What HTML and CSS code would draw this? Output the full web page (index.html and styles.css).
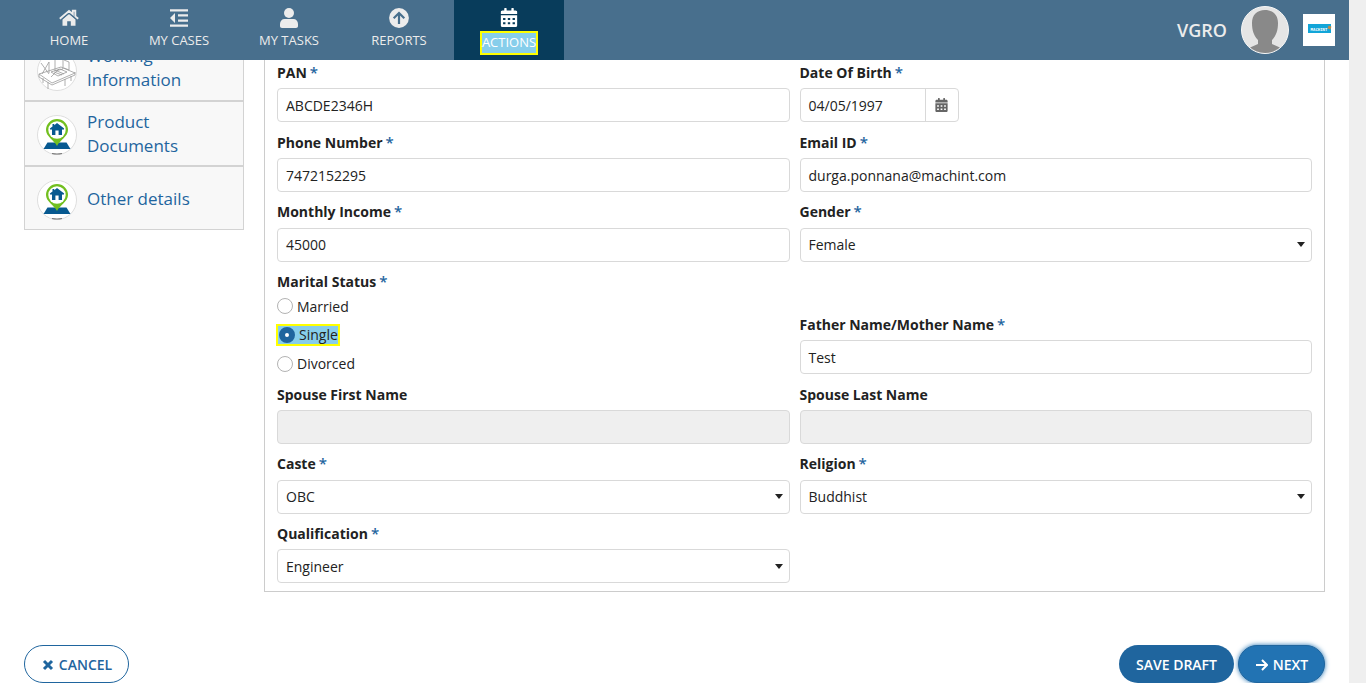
FILE: index.html
```html
<!DOCTYPE html>
<html lang="en">
<head>
<meta charset="utf-8">
<title>Applicant Details</title>
<link rel="stylesheet" href="styles.css">
</head>
<body>
<svg class="defs" width="0" height="0" aria-hidden="true">
  <symbol id="pin" viewBox="0 0 40 40">
    <circle cx="20" cy="20" r="19.5" fill="#fff" stroke="#dedede"/>
    <path d="M10.500 27.500h19l4 6.500h-27z" fill="#075990"/>
    <path d="M20 31c-3-6-11-9.500-11-16a11 11 0 0 1 22 0c0 6.500-8 10-11 16z" fill="#72bf1f"/>
    <circle cx="20" cy="15" r="8.700" fill="#fff"/>
    <path d="M20 8l7.200 5.500-1 1.500-1.200-.8V20h-3.400v-4.500h-3.200V20H15v-5.800l-1.200.8-1-1.500 2.700-2V9h1.800v1.200z" fill="#075990"/>
    <path d="M15 38.500q5 1 10 0" fill="none" stroke="#777" stroke-width="1.200"/>
  </symbol>
  <symbol id="calendar" viewBox="0 0 448 512">
    <path fill-rule="evenodd" d="M0 464c0 26 22 48 48 48h352c26 0 48-22 48-48V192H0zM320 268h64v54h-64zm0 116h64v54h-64zM192 268h64v54h-64zm0 116h64v54h-64zM64 268h64v54H64zm0 116h64v54H64zM400 64h-48V16c0-9-7-16-16-16h-32c-9 0-16 7-16 16v48H160V16c0-9-7-16-16-16h-32c-9 0-16 7-16 16v48H48C22 64 0 86 0 112v48h448v-48c0-26-22-48-48-48z"/>
  </symbol>
</svg>
<header class="topbar">
  <nav class="tabs">
    <a class="tab"><svg class="tab-icon" viewBox="0 0 20 20"><path d="M10 5.900l6.500 5.500V17.700h-4.700v-4.500H8.200v4.500H3.500v-6.300z"/><path d="M.8 10.800L10 3.100l3.800 3.200V2.700h2.500v5.700l2.900 2.400" fill="none" stroke="currentColor" stroke-width="1.900"/><path d="M2.300 11.700L10 5.300l7.700 6.400" fill="none" stroke="#486f8d" stroke-width=".8"/></svg><span class="tab-label">HOME</span></a>
    <a class="tab"><svg class="tab-icon" viewBox="0 0 20 20"><path d="M1 1.200h18v2.300H1zm8 5.100h10v2.300H9zm0 5.100h10v2.300H9zM1 16.500h18v2.300H1zM6 5v10L1 10z"/></svg><span class="tab-label">MY CASES</span></a>
    <a class="tab"><svg class="tab-icon" viewBox="0 0 20 20"><circle cx="10" cy="5" r="5"/><path d="M5.500 11h9c2.500 0 4.500 2 4.500 5v2c0 1.200-.8 2-2 2H3c-1.200 0-2-.8-2-2v-2c0-3 2-5 4.500-5z"/></svg><span class="tab-label">MY TASKS</span></a>
    <a class="tab"><svg class="tab-icon" viewBox="0 0 20 20"><circle cx="10" cy="10" r="9.900"/><path d="M10 16V5M4.700 10.300L10 5l5.300 5.300" fill="none" stroke="#486f8d" stroke-width="2.200"/></svg><span class="tab-label">REPORTS</span></a>
    <a class="tab tab-active"><svg class="tab-icon" viewBox="0 0 20 20"><use href="#calendar" x="1.500" y="0" width="17" height="19"/></svg><span class="tab-label tab-marked">ACTIONS</span></a>
  </nav>
  <div class="account">
    <span class="user">VGRO</span>
    <svg class="avatar" viewBox="0 0 48 48"><defs><clipPath id="face"><circle cx="24" cy="24" r="23"/></clipPath></defs><circle cx="24" cy="24" r="23.500" fill="#e5e5e5" stroke="#f7f7f7"/><path clip-path="url(#face)" d="M24 4c8 0 13 5 13 13 0 8-2 12-5 16l-1 1v4l9 4v6H8v-6l9-4v-4l-1-1c-3-4-5-8-5-16C11 9 16 4 24 4z" fill="#898989"/></svg>
    <div class="logo"><span class="logo-text">MACHINT</span><i class="logo-flag"></i></div>
  </div>
</header>
<div class="page">
  <aside class="steps">
    <div class="step"><svg class="step-icon" viewBox="0 0 40 40"><circle cx="20" cy="20" r="19.500" fill="#fff" stroke="#dedede"/><g fill="none" stroke="#9a9a9a" stroke-width=".8"><path d="M2 23l22-7 14 6-23 10zM2 23v3l13 8 23-10v-3M11 31v7m17-10v7m6-10v5M6 27v5M4 12l8 11m-7 0l7-12v11M18 8v12l8-2V6zm9 1l5 2v8l-5-2M14 21l9-3 7 3-9 4zM17 21l8 3m-5-4l7 3M22 18l-8 8"/></g></svg><span class="step-label">Working Information</span></div>
    <div class="step"><svg class="step-icon"><use href="#pin"/></svg><span class="step-label">Product Documents</span></div>
    <div class="step"><svg class="step-icon"><use href="#pin"/></svg><span class="step-label">Other details</span></div>
  </aside>
  <main class="panel">
    <div class="field"><div class="label">PAN<span class="req">*</span></div><div class="input">ABCDE2346H</div></div>
    <div class="field"><div class="label">Date Of Birth<span class="req">*</span></div><div class="date"><div class="date-value">04/05/1997</div><div class="date-button"><svg class="date-icon"><use href="#calendar"/></svg></div></div></div>
    <div class="field"><div class="label">Phone Number<span class="req">*</span></div><div class="input">7472152295</div></div>
    <div class="field"><div class="label">Email ID<span class="req">*</span></div><div class="input">durga.ponnana@machint.com</div></div>
    <div class="field"><div class="label">Monthly Income<span class="req">*</span></div><div class="input">45000</div></div>
    <div class="field"><div class="label">Gender<span class="req">*</span></div><div class="input select">Female</div></div>
    <div class="field"><div class="label">Marital Status<span class="req">*</span></div>
      <div class="radios">
        <div class="radio"><i class="dot"></i><span class="radio-text">Married</span></div>
        <div class="radio radio-marked"><i class="dot dot-on"></i>Single</div>
        <div class="radio"><i class="dot"></i>Divorced</div>
      </div>
    </div>
    <div class="field field-bottom"><div class="label">Father Name/Mother Name<span class="req">*</span></div><div class="input">Test</div></div>
    <div class="field"><div class="label">Spouse First Name</div><div class="input disabled"></div></div>
    <div class="field"><div class="label">Spouse Last Name</div><div class="input disabled"></div></div>
    <div class="field"><div class="label">Caste<span class="req">*</span></div><div class="input select">OBC</div></div>
    <div class="field"><div class="label">Religion<span class="req">*</span></div><div class="input select">Buddhist</div></div>
    <div class="field"><div class="label">Qualification<span class="req">*</span></div><div class="input select">Engineer</div></div>
  </main>
</div>
<footer class="actions">
  <button class="btn btn-outline"><svg class="btn-icon" viewBox="0 0 12 12"><path d="M2 2l8 8M10 2l-8 8" stroke-width="3"/></svg>CANCEL</button>
  <button class="btn btn-save">SAVE DRAFT</button>
  <button class="btn btn-next"><svg class="btn-icon" viewBox="0 0 12 12"><path d="M0 6h11M6 1l5 5-5 5" stroke-width="2"/></svg>NEXT</button>
</footer>
</body>
</html>
```

FILE: styles.css
```css
* { box-sizing: border-box; }
body {
  margin: 0;
  width: 1366px;
  height: 683px;
  overflow: hidden;
  border-right: 17px solid #efefef;
  background: #fff;
  color: #222;
  font: 14px/20px "Open Sans", sans-serif;
}
.defs { position: absolute; }
.topbar {
  position: relative;
  z-index: 1;
  display: flex;
  justify-content: space-between;
  height: 60px;
  padding: 0 14px;
  background: #486f8d;
  color: #ececec;
}
.tabs { display: flex; }
.tab {
  display: flex;
  flex-direction: column;
  align-items: center;
  width: 110px;
  padding-top: 8px;
}
.tab-active { background: #083c5b; color: #fff; }
.tab-icon { width: 20px; height: 20px; fill: currentColor; }
.tab-label { margin-top: 4px; font-size: 13px; line-height: 16px; }
.tab-marked {
  margin-top: 3px;
  height: 24px;
  border: 2px solid #ff0;
  background: #87ceeb;
  line-height: 19px;
}
.account { display: flex; align-items: center; }
.user { font-size: 18px; font-weight: 600; }
.avatar { width: 48px; height: 48px; margin: 0 14px; }
.logo {
  position: relative;
  display: flex;
  align-items: center;
  justify-content: center;
  width: 32px;
  height: 32px;
  background: #fff;
}
.logo-text {
  width: 23px;
  height: 9px;
  margin-top: -3px;
  background: #12a5d8;
  color: #fff;
  font: bold 4px/12px "DejaVu Sans Mono", monospace;
  text-align: center;
}
.logo-flag {
  position: absolute;
  top: 12px;
  right: 4px;
  width: 3px;
  height: 3px;
  background: #c48a45;
  transform: rotate(25deg);
}
.page { display: flex; align-items: flex-start; gap: 20px; padding-left: 24px; }
.steps {
  width: 220px;
  border: 1px solid #d3d3d3;
  border-top: 0;
  background: #f8f8f8;
}
.step {
  display: flex;
  align-items: center;
  gap: 10px;
  height: 65px;
  padding: 3px 12px 0;
  border-bottom: 2px solid #d3d3d3;
}
.step:first-child { height: 42px; align-items: flex-end; padding: 0 12px 9px; }
.step:first-child .step-label { margin-bottom: -1px; }
.step:last-child { height: 62px; border-bottom: 0; }
.step-icon { width: 40px; height: 40px; flex: none; }
.step-label {
  margin-top: -2px;
  width: 120px;
  color: #1f659e;
  font-size: 17px;
  line-height: 24px;
}
.panel {
  display: grid;
  grid-template-columns: 512.5px 512.5px;
  grid-template-rows: 69.6px 69.6px 69.7px 112.9px 69.6px 69.6px 69px;
  column-gap: 10px;
  width: 1061px;
  height: 532px;
  padding: 3px 12px 0;
  border: 1px solid #ccc;
  border-top: 0;
}
.label { height: 25.38px; font-weight: 700; }
.req { margin-left: 3px; color: #1f659e; font-weight: 600; font-size: 15px; line-height: 16px; }
.input {
  position: relative;
  height: 34px;
  padding: .6px 8px 0;
  border: 1px solid #d9d9d9;
  border-radius: 4px;
  line-height: 31px;
}
.select::after {
  content: "";
  position: absolute;
  right: 6px;
  top: 13.500px;
  border: 4.5px solid transparent;
  border-top: 5px solid #222;
  border-bottom: 0;
}
.disabled { background: #efefef; }
.field-bottom { align-self: end; height: 69.7px; }
.date {
  display: flex;
  width: 159px;
  height: 34px;
  border: 1px solid #d9d9d9;
  border-radius: 4px;
  line-height: 33px;
}
.date-value { width: 125px; padding-left: 8px; border-right: 1px solid #d9d9d9; }
.date-button { display: flex; flex: 1; align-items: center; justify-content: center; }
.date-icon { width: 13px; height: 14px; fill: #666; margin-top: -1px; }
.radios { display: flex; flex-direction: column; align-items: flex-start; margin-top: -.8px; }
.radio { display: flex; align-items: center; gap: 4px; height: 20px; }
.radio-text { padding-top: 1.4px; }
.dot { width: 16px; height: 16px; border: 1px solid #b3b3b3; border-radius: 50%; }
.dot-on { border: 6px solid #1f659e; background: #fff; }
.radio-marked {
  height: 22px;
  margin: 8px 0 8px -1px;
  padding-left: 1px;
  border: 2px solid #ff0;
  background: #87ceeb;
}
.actions { display: flex; gap: 4px; padding: 53px 24px 0; }
.btn {
  height: 38px;
  border: 0;
  border-radius: 19px;
  padding: 2px 0 0;
  color: #fff;
  font: 600 14px/36px "Open Sans", sans-serif;
  white-space: nowrap;
}
.btn-outline { width: 105px; margin-right: auto; padding-left: 1px; border: 1px solid #1f659e; background: #fff; color: #1f659e; line-height: 34px; }
.btn-save { width: 115px; background: #1f659e; }
.btn-next { width: 87px; padding-left: 1px; border: 1px solid #1f659e; background: #2273b3; box-shadow: 0 0 5px #2273b3; line-height: 34px; }
.btn-icon { width: 12px; height: 12px; margin-right: 5px; vertical-align: -1px; fill: none; stroke: currentColor; }
```
